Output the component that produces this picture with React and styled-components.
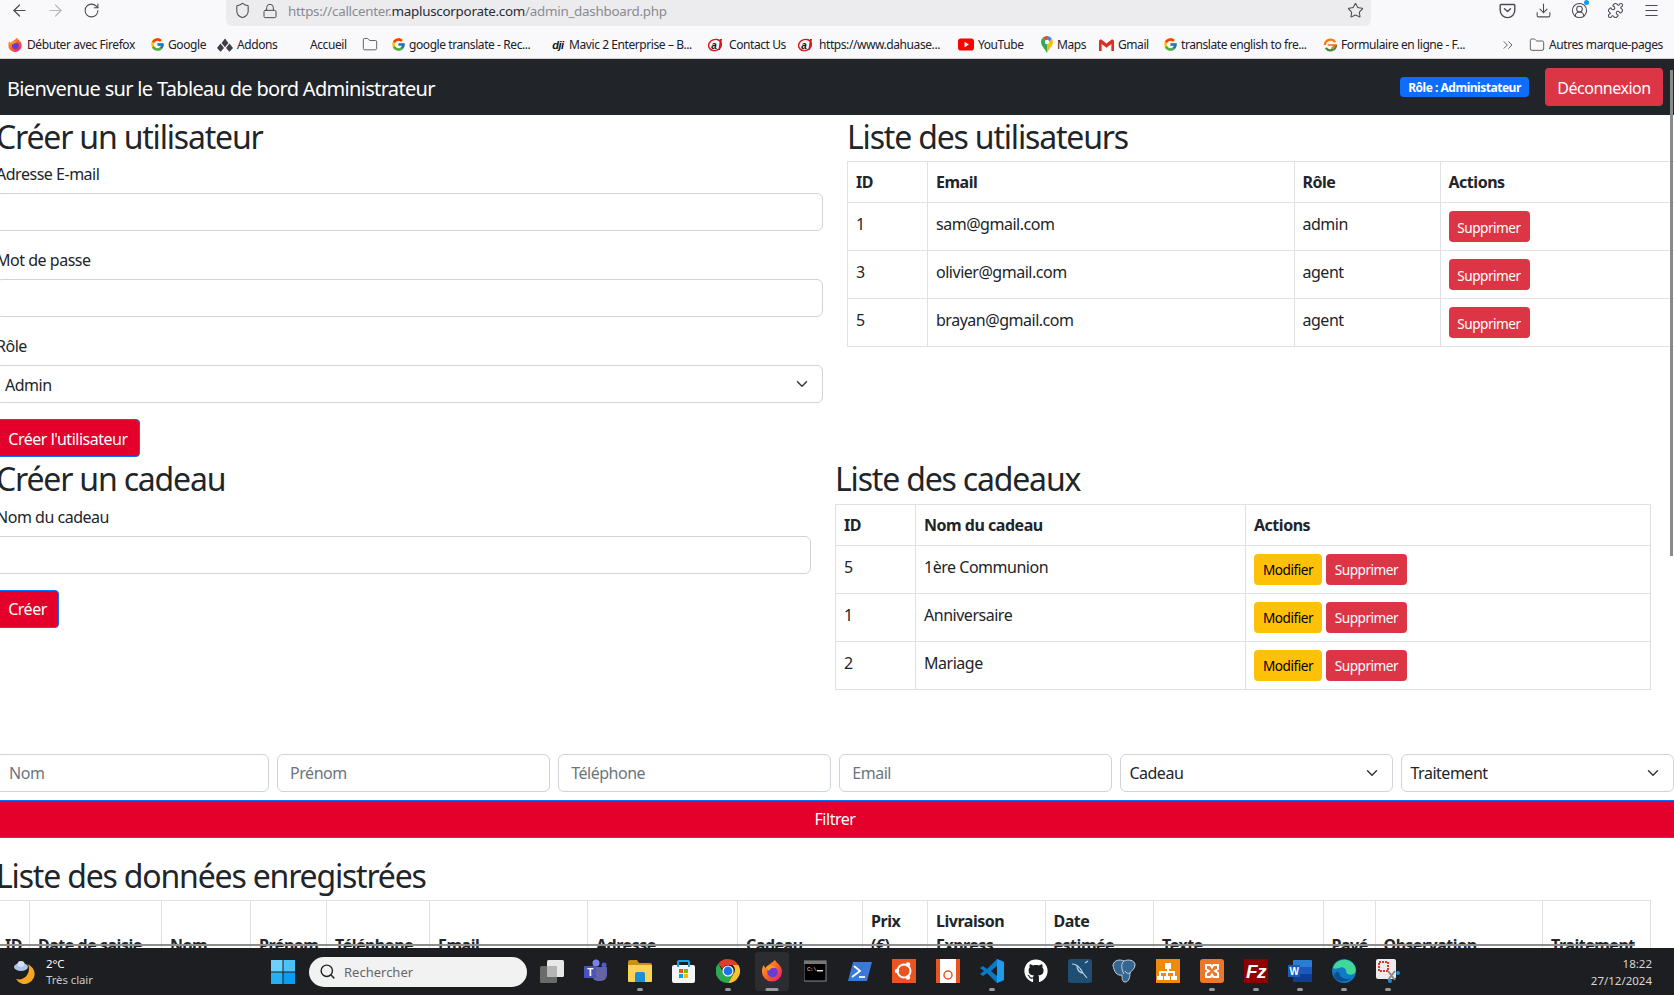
import React from 'react';
import styled, { createGlobalStyle } from 'styled-components';
import { ArrowLeft, ArrowRight, RotateCw, Shield, Lock, Star, Download, Puzzle, Menu, ChevronsRight, Folder, Search, CircleUserRound } from 'lucide-react';
import { FcGoogle } from 'react-icons/fc';
import { FaGithub } from 'react-icons/fa';

const FONT = `"Noto Sans", "Open Sans", sans-serif`;
const CHEVRON = `url("data:image/svg+xml,%3csvg xmlns='http://www.w3.org/2000/svg' viewBox='0 0 16 16'%3e%3cpath fill='none' stroke='%23343a40' stroke-linecap='round' stroke-linejoin='round' stroke-width='2' d='m2 5 6 6 6-6'/%3e%3c/svg%3e")`;

const Global = createGlobalStyle`
  html, body { margin: 0; padding: 0; height: 995px; overflow: hidden; background: #fff; }
  body { font-family: ${FONT}; font-size: 16px; line-height: 24px; color: #212529; letter-spacing: -0.03em; }
  * { box-sizing: border-box; }
`;

const Screen = styled.div`
  width: 1674px; height: 995px; display: flex; flex-direction: column; overflow: hidden;
`;
const BrowserChrome = styled.header`
  flex: none; height: 59px; background: #f9f9fb; border-bottom: 1px solid #cfcfd4; display: flex; flex-direction: column;
`;
const Toolbar = styled.div`
  height: 26px; display: flex; align-items: flex-start; color: #4a4a55;
`;
const NavGroup = styled.div`
  display: flex; width: 226px; padding-left: 1px;
`;
const ToolButton = styled.span`
  width: ${p => p.$w || 36}px; height: 21px; display: flex; align-items: center; justify-content: center; position: relative;
  color: ${p => p.$dim ? '#b8b8bf' : '#4a4a55'};
`;
const UrlBar = styled.div`
  width: 1145px; height: 26px; background: #ececee; border-radius: 0 0 6px 6px; display: flex; align-items: center; padding: 0 6px 5px 6px;
`;
const UrlText = styled.span`
  font-size: 13.4px; color: #8a8a92; flex: 1; white-space: nowrap; letter-spacing: -0.02em;
  b { font-weight: 400; color: #2b2b33; }
`;
const SideTools = styled.div`
  display: flex; margin-left: 118px;
`;
const Dot = styled.i`
  position: absolute; top: 0; right: 8px; width: 5px; height: 5px; border-radius: 50%; background: #0a9df5;
`;
const Bookmarks = styled.nav`
  height: 32px; display: flex; align-items: center; padding: 5px 0 0 7px; font-size: 12px; color: #20202a; letter-spacing: -0.035em;
`;
const Bookmark = styled.span`
  width: ${p => p.$w}px; flex: none; display: flex; align-items: center; gap: ${p => p.$gap ?? 4}px; white-space: nowrap;
`;
const BmIcon = styled.span`
  width: 16px; height: 16px; flex: none; display: flex; align-items: center; justify-content: center; color: #4a4a55;
`;
const DjiMark = styled.span`
  font: italic 900 11px "Liberation Sans", sans-serif; color: #111; letter-spacing: -0.5px;
`;

const PageArea = styled.main`
  flex: 1; min-height: 0; position: relative; overflow: hidden; background: #fff;
`;
const Navbar = styled.div`
  height: 56px; background: #212529; color: #fff; display: flex; align-items: center; justify-content: space-between; padding: 0 11px 0 7px;
`;
const Brand = styled.span`
  font-size: 20px; line-height: 30px; letter-spacing: -0.034em; padding-top: 4px;
`;
const NavRight = styled.div`
  display: flex; align-items: center; gap: 16px;
`;
const RoleBadge = styled.span`
  background: #0d6efd; color: #fff; font-size: 12px; font-weight: 700; line-height: 21px; height: 20px; width: 129px; text-align: center; border-radius: 4px;
`;
const LogoutButton = styled.button`
  font: inherit; letter-spacing: inherit; width: 118px; height: 38px; padding: 2px 0 0; background: #dc3545; color: #fff; border: 0; border-radius: 4px;
`;
const Content = styled.div`
  width: 1678px; margin-left: -4px;
`;
const Row = styled.section`
  display: grid; grid-template-columns: ${p => p.$cols}; column-gap: ${p => p.$gap}px; align-items: start;
`;
const Title = styled.h2`
  margin: 0 0 5px; padding-top: 3px; font-size: 32px; line-height: 38.4px; font-weight: 400; letter-spacing: -0.037em;
`;
const Field = styled.div`
  margin-bottom: 16px;
`;
const Label = styled.label`
  display: block; padding-top: 1px; margin-bottom: 7px;
`;
const TextInput = styled.input`
  display: block; width: 100%; height: 38px; font: inherit; letter-spacing: inherit; padding: 6px 12px; border: 1px solid #ced4da; border-radius: 6px; color: #212529; background: #fff;
  &::placeholder { color: #6c757d; opacity: 1; }
`;
const SelectBox = styled.select`
  display: block; width: 100%; height: 38px; font: inherit; letter-spacing: inherit; padding: 1px 36px 0 8px; border: 1px solid #ced4da; border-radius: 6px; color: #212529;
  appearance: none; background: #fff ${CHEVRON} no-repeat right 12px center / 16px 12px;
`;
const BrandButton = styled.button`
  display: block; height: 38px; padding: 1px 0 0; width: ${p => p.$w}; font: inherit; letter-spacing: inherit; color: #fff; background: #e4002b; border: 1px solid #0d6efd; border-radius: 4px;
`;
const Table = styled.table`
  width: ${p => p.$w}px; table-layout: fixed; border-collapse: collapse;
  th, td { border: 1px solid #dee2e6; padding: 8px; text-align: left; vertical-align: top; }
  td { padding: 9px 8px 7px; }
  td:last-child { padding: 8px; }
  thead th { vertical-align: bottom; font-weight: 700; }
`;
const Col = styled.col`
  width: ${p => p.$w}px;
`;
const ActionBtn = styled.button`
  height: 31px; width: ${p => p.$w}px; padding: 2px 0 0; font: inherit; font-size: 13.6px; letter-spacing: inherit; border: 0; border-radius: 4px;
  background: ${p => p.$warn ? '#ffc107' : '#dc3545'}; color: ${p => p.$warn ? '#000' : '#fff'};
  & + & { margin-left: 4px; }
`;
const FilterRow = styled.div`
  margin-top: 64px; display: grid; grid-template-columns: repeat(6, 272.5px); column-gap: 8.6px;
`;
const FilterSubmit = styled(BrandButton)`
  width: 100%; margin: 8px 0 16px; border-radius: 0; border-width: 1px 0;
`;
const ShadowLine = styled.div`
  position: absolute; left: 0; top: 885px; width: 1635px; height: 2px; background: #8e8e8e;
`;
const ScrollThumb = styled.div`
  position: absolute; right: 1px; top: 11px; width: 3px; height: 486px; background: #8a8a8a;
`;

const Taskbar = styled.footer`
  flex: none; height: 47px; background: #1d1e21; color: #fff; display: flex; align-items: center; position: relative; padding-left: 14px;
`;
const Weather = styled.div`
  width: 257px; display: flex; align-items: center; gap: 8px; font-size: 11.5px; line-height: 16px; letter-spacing: -0.01em;
  small { display: block; font-size: 11.5px; color: #c8c8c8; }
`;
const StartTile = styled.span`
  width: 24px; height: 24px; flex: none; margin-right: 14px; display: flex;
`;
const SearchPill = styled.div`
  width: 218px; height: 30px; flex: none; background: #f2f2f2; border-radius: 15px; display: flex; align-items: center; gap: 8px; padding-left: 10px; color: #666; font-size: 13px; letter-spacing: 0;
  svg { color: #222; }
`;
const Tasks = styled.div`
  display: flex; margin-left: 3px;
`;
const Task = styled.span`
  width: 44px; height: 47px; position: relative; display: flex; align-items: center; justify-content: center; padding-bottom: 2px;
  &::before { content: ''; display: ${p => p.$active ? 'block' : 'none'}; position: absolute; left: 5px; right: 5px; top: 4px; bottom: 4px; background: rgba(255,255,255,.07); border-radius: 4px; }
  &::after { content: ''; display: ${p => p.$on ? 'block' : 'none'}; position: absolute; left: 50%; bottom: 4px; height: 3px; border-radius: 2px; transform: translateX(-50%); width: ${p => p.$active ? 13 : 6}px; background: #9a9a9a; }
  svg { position: relative; }
`;
const Clock = styled.div`
  margin-left: auto; padding-right: 22px; text-align: right; font-size: 11.5px; line-height: 17px; color: #d8d8d8; letter-spacing: 0;
`;

const FirefoxIcon = ({ s = 16 }) => (
  <svg width={s} height={s} viewBox="0 0 24 24">
    <defs><linearGradient id="ffg" x1="0" y1="0" x2="1" y2="1"><stop offset="0" stopColor="#ffb327" /><stop offset=".55" stopColor="#ff5a2a" /><stop offset="1" stopColor="#e31587" /></linearGradient></defs>
    <path d="M15 1c1 3 7 5 7 12a10 10 0 1 1-20-1c0-3 1-5 2-6 0 2 1 2 2 3 1-3 5-4 9-8z" fill="url(#ffg)" />
    <circle cx="12.5" cy="13" r="5.2" fill="#6a3bd0" />
    <path d="M6 8c3-2 8-2 10 1-3-1-6 0-7 3L6 8z" fill="#ff9a24" />
  </svg>
);
const ChromeIcon = () => (
  <svg width="24" height="24" viewBox="0 0 24 24">
    <path d="M12 0a12 12 0 0 1 10.4 6H12a6 6 0 0 0-5.6 3.8L2.4 4.4A12 12 0 0 1 12 0z" fill="#e33b2e" />
    <path d="M22.4 6A12 12 0 0 1 12 24l5.2-9a6 6 0 0 0-.6-9z" fill="#fbc02d" />
    <path d="M12 24A12 12 0 0 1 2.4 4.4L7 13a6 6 0 0 0 10.2 2L12 24z" fill="#2da94f" />
    <circle cx="12" cy="12" r="5.6" fill="#fff" /><circle cx="12" cy="12" r="4.4" fill="#1a73e8" />
  </svg>
);
const AtIcon = () => (
  <svg width="16" height="16" viewBox="0 0 16 16">
    <ellipse cx="7" cy="8" rx="6.5" ry="5.5" fill="none" stroke="#d8141c" strokeWidth="1.4" transform="rotate(-20 7 8)" />
    <text x="3.2" y="11.5" fontSize="10" fontWeight="900" fontStyle="italic" fontFamily="Liberation Sans" fill="#111">a</text>
    <path d="M12 2l2 0-2 11-1.6 0z" fill="#d8141c" />
  </svg>
);
const AddonsIcon = () => (
  <svg width="16" height="16" viewBox="0 0 16 16" fill="#3e3e48">
    <path d="M8 1.500l3.400 4.500-3.400 4.200L4.600 6zM3.500 6.500L7 11l-3.500 3.800L0 11zM12.500 6.500L16 11l-3.500 3.800L9 11z" />
  </svg>
);
const PocketIcon = () => (
  <svg width="17" height="17" viewBox="0 0 17 17" fill="none" stroke="currentColor" strokeWidth="1.4" strokeLinejoin="round" strokeLinecap="round">
    <path d="M2 2.500h13a.8.8 0 0 1 .8.8v5a7.300 7.300 0 0 1-14.600 0v-5a.8.8 0 0 1 .8-.8z" />
    <path d="M5.500 6.800l3 2.800 3-2.800" />
  </svg>
);
const YoutubeIcon = () => (
  <svg width="17" height="13" viewBox="0 0 17 13"><rect width="17" height="13" rx="3" fill="#f00" /><path d="M7 3.5l4.5 3L7 9.5z" fill="#fff" /></svg>
);
const MapsIcon = () => (
  <svg width="12" height="17" viewBox="0 0 12 17">
    <path d="M6 17C4 13 0 9.5 0 6a6 6 0 0 1 2-4.5L6 6z" fill="#34a853" /><path d="M2 1.500A6 6 0 0 1 6 0l2 3-2 3z" fill="#ea4335" />
    <path d="M6 0a6 6 0 0 1 5 3L6 8z" fill="#4285f4" /><path d="M11 3a6 6 0 0 1 1 3c0 3.500-4 7-6 11V8z" fill="#fbbc04" />
    <circle cx="6" cy="6" r="2.200" fill="#fff" />
  </svg>
);
const GmailIcon = () => (
  <svg width="15" height="12" viewBox="0 0 15 12"><path d="M1 12V2l6.500 5L14 2v10h-2.500V5.500l-4 3-4-3V12z" fill="#e8e8e8" /><path d="M0 2.500C0 .5 2 0 3 1l4.500 3.500L12 1c1-1 3-.5 3 1.500V12h-2.600V5L7.500 8.700 2.600 5v7H0z" fill="#d93025" /></svg>
);
const FormIcon = () => (
  <svg width="15" height="16" viewBox="0 0 16 16" fill="none"><path d="M2 8a6 6 0 0 1 11-3" stroke="#f57c00" strokeWidth="2.400" /><path d="M14 8a6 6 0 0 1-11 3" stroke="#3e8e41" strokeWidth="2.400" /><path d="M5 8h8L9 12" stroke="#ef6c00" strokeWidth="1.800" /></svg>
);
const WeatherIcon = () => (
  <svg width="24" height="24" viewBox="0 0 24 24">
    <path d="M9 4a10 10 0 1 1-7 15c7 2 13-3 13-11 0-2-1-3-2-4z" fill="#f5a623" />
    <ellipse cx="7" cy="7" rx="7" ry="4" fill="#a8c4ea" /><ellipse cx="7" cy="4" rx="3.500" ry="3" fill="#d4e1f2" />
  </svg>
);
const WinLogo = () => (
  <svg width="24" height="24" viewBox="0 0 24 24">
    <rect width="11.500" height="11.500" fill="#6fd0fb" /><rect x="12.500" width="11.500" height="11.500" fill="#4cc2f7" />
    <rect y="12.500" width="11.500" height="11.500" fill="#26b0f4" /><rect x="12.500" y="12.500" width="11.500" height="11.500" fill="#0e9cf0" />
  </svg>
);
const I = ({ children, vb = '0 0 24 24' }) => <svg width="24" height="24" viewBox={vb}>{children}</svg>;
const taskIcons = [
  { on: 0, el: <I><rect x="7" y="1" width="17" height="17" rx="1.500" fill="#e8e8e8" /><rect x="0" y="7" width="17" height="17" rx="1.500" fill="#6a6a6a" /><rect x="7" y="7" width="10" height="11" fill="#b5b5b5" /></I> },
  { on: 0, el: <I><circle cx="12" cy="4" r="3.500" fill="#7b83eb" /><circle cx="20" cy="6" r="2.500" fill="#5059c9" /><path d="M8 8h15v8a6 6 0 0 1-6 6h-3a6 6 0 0 1-6-6z" fill="#6264a7" /><rect y="7" width="12" height="12" rx="1" fill="#4b53bc" /><text x="6" y="16.500" textAnchor="middle" fontSize="10" fontWeight="700" fontFamily="Liberation Sans" fill="#fff">T</text></I> },
  { on: 1, el: <I><path d="M0 3a2 2 0 0 1 2-2h7l2 3h11a2 2 0 0 1 2 2v3H0z" fill="#c98f1b" /><path d="M0 6h24v16a1 1 0 0 1-1 1H1a1 1 0 0 1-1-1z" fill="#fbd258" /><path d="M7 15a2 2 0 0 1 2-2h6a2 2 0 0 1 2 2v8H7z" fill="#1a8fd6" /></I> },
  { on: 0, el: <I><rect y="6" width="23" height="18" rx="2" fill="#f5f5f5" /><path d="M6 8V3a1 1 0 0 1 1-1h9a1 1 0 0 1 1 1v5" fill="none" stroke="#17a7e0" strokeWidth="2" /><rect x="7" y="10" width="4" height="4" fill="#f25022" /><rect x="12" y="10" width="4" height="4" fill="#7fba00" /><rect x="7" y="15" width="4" height="4" fill="#00a4ef" /><rect x="12" y="15" width="4" height="4" fill="#ffb900" /></I> },
  { on: 1, el: <ChromeIcon /> },
  { on: 1, active: 1, el: <FirefoxIcon s={24} /> },
  { on: 0, el: <I><rect y="2" width="22" height="20" fill="#000" stroke="#8a8a8a" /><rect y="2" width="22" height="3" fill="#777" /><text x="3" y="12" fontSize="6" fontFamily="Liberation Mono" fill="#ddd">C:\</text><rect x="13" y="11" width="6" height="1.500" fill="#ddd" /></I> },
  { on: 0, el: <I><path d="M5 3h19l-5 19H0z" fill="#3b78d8" /><path d="M6 7l6 5-8 6" fill="none" stroke="#fff" strokeWidth="1.800" /><path d="M11 18h6" stroke="#fff" strokeWidth="1.800" /></I> },
  { on: 0, el: <I><rect width="24" height="24" fill="#e95420" /><circle cx="12" cy="12" r="6.500" fill="none" stroke="#fff" strokeWidth="2" /><circle cx="5" cy="12" r="2.200" fill="#fff" /><circle cx="16" cy="5.500" r="2.200" fill="#fff" /><circle cx="16" cy="18.500" r="2.200" fill="#fff" /></I> },
  { on: 0, el: <I><rect width="24" height="24" fill="#e95420" /><rect x="4" width="16" height="24" fill="#fff" /><circle cx="12" cy="16" r="4" fill="none" stroke="#e95420" strokeWidth="1.500" /></I> },
  { on: 1, el: <I><path d="M17 0l7 3v18l-7 3L7 14l-4 3-3-2 4-3-4-3 3-2 4 3z" fill="#0b7ac6" /><path d="M17 0l7 3v18l-7 3z" fill="#1f9cf0" /><path d="M17 7l-6 5 6 5z" fill="#1d1e21" /></I> },
  { on: 0, el: <FaGithub size={24} color="#fff" /> },
  { on: 0, el: <I><rect width="24" height="24" rx="3" fill="#1f4e74" /><path d="M4 5c6 0 9 5 11 9l4 5M15 14c-3 0-6-3-6-7M17 4l3-2" fill="none" stroke="#b8d0e0" strokeWidth="1.200" /></I> },
  { on: 0, el: <I><path d="M1 6c1-5 7-6 11-4 4-2 11-1 11 4 0 4-4 6-5 8 0 4-1 9-5 9-3 0-3-4-3-7-5 1-8-3-9-10z" fill="#336791" stroke="#c5d2dc" strokeWidth="1" /><path d="M12 2c-3 2-3 8 0 13M18 14c-2 1-4 0-5-2" fill="none" stroke="#c5d2dc" strokeWidth="1" /></I> },
  { on: 0, el: <I><rect width="24" height="24" fill="#f08a0c" /><path d="M9 4h6v6h-2v2h6v5h2v4h-6v-4h2v-3h-5v3h2v4H8v-4h2v-3H5v3h2v4H1v-4h2v-5h8v-2H9z" fill="#fff" /></I> },
  { on: 1, el: <I><rect width="24" height="24" rx="3" fill="#e9772c" /><path d="M6 6h4.500L12 8.500 13.500 6H18v4l-3 2 3 2v4h-4.500L12 15.500 10.500 18H6v-4l3-2-3-2z" fill="none" stroke="#fff" strokeWidth="2" /></I> },
  { on: 1, el: <I><rect width="24" height="24" fill="#8f0000" /><text x="12" y="19" textAnchor="middle" fontSize="19" fontStyle="italic" fontWeight="700" fontFamily="Liberation Sans" fill="#fff">Fz</text></I> },
  { on: 1, el: <I><rect x="5" y="1" width="19" height="22" rx="1" fill="#2b7cd3" /><rect x="5" y="8" width="19" height="7" fill="#185abd" /><rect x="5" y="15" width="19" height="8" fill="#103f91" /><rect y="6" width="12" height="12" fill="#185abd" /><text x="6" y="16" textAnchor="middle" fontSize="10" fontWeight="700" fontFamily="Liberation Sans" fill="#fff">W</text></I> },
  { on: 1, el: <I><circle cx="12" cy="12" r="12" fill="#0f7bc4" /><path d="M1 9C3 1 12-1 18 2c5 3 7 8 5 12-3 3-9 2-9-2 0-3-4-5-7-3-3 1-5 1-6 0z" fill="#41d69a" /><path d="M7 13c0 5 6 9 12 6-4 5-14 5-17-2 0-3 3-5 5-4z" fill="#0c4f8f" /></I> },
  { on: 1, el: <I><rect width="20" height="20" rx="2" fill="#ececec" /><rect x="3" y="3" width="9" height="9" fill="none" stroke="#d83b2b" strokeWidth="2" strokeDasharray="2 1" /><path d="M12 12l7 9M19 12l-7 9" stroke="#8a8a8a" strokeWidth="2" /><circle cx="22" cy="14" r="2" fill="#1a8fd6" /><circle cx="14" cy="22" r="2" fill="#1a8fd6" /></I> },
];

const marks = [
  { w: 142, icon: <FirefoxIcon />, text: 'Débuter avec Firefox' },
  { w: 68, icon: <FcGoogle size={15} />, text: 'Google', gap: 3 },
  { w: 93, icon: <AddonsIcon />, text: 'Addons' },
  { w: 52, text: 'Accueil' },
  { w: 28, icon: <Folder size={17} strokeWidth={1.300} /> },
  { w: 160, icon: <FcGoogle size={15} />, text: 'google translate - Rec...', gap: 3 },
  { w: 158, icon: <DjiMark>dji</DjiMark>, text: 'Mavic 2 Enterprise – B...', gap: 3 },
  { w: 90, icon: <AtIcon />, text: 'Contact Us', gap: 5 },
  { w: 160, icon: <AtIcon />, text: 'https://www.dahuase...', gap: 5 },
  { w: 81, icon: <YoutubeIcon />, text: 'YouTube', gap: 4 },
  { w: 59, icon: <MapsIcon />, text: 'Maps', gap: 2 },
  { w: 64, icon: <GmailIcon />, text: 'Gmail', gap: 4 },
  { w: 160, icon: <FcGoogle size={15} />, text: 'translate english to fre...', gap: 3 },
  { w: 178, icon: <FormIcon />, text: 'Formulaire en ligne - F...', gap: 3 },
  { w: 29, icon: <ChevronsRight size={18} strokeWidth={1.300} /> },
  { w: 140, icon: <Folder size={16} strokeWidth={1.300} />, text: 'Autres marque-pages', gap: 4 },
];
const users = [['1', 'sam@gmail.com', 'admin'], ['3', 'olivier@gmail.com', 'agent'], ['5', 'brayan@gmail.com', 'agent']];
const gifts = [['5', '1ère Communion'], ['1', 'Anniversaire'], ['2', 'Mariage']];
const dataCols = [
  [33, 'ID'], [132, 'Date de saisie'], [89, 'Nom'], [76, 'Prénom'], [103, 'Téléphone'], [158, 'Email'], [150, 'Adresse'], [125, 'Cadeau'],
  [65, 'Prix (€)'], [117.500, 'Livraison Express'], [108.500, 'Date estimée'], [169.500, 'Texte'], [52, 'Pavé'], [167.500, 'Observation'], [108, 'Traitement'],
];

export default function App() {
  return (
    <Screen>
      <Global />
      <BrowserChrome>
        <Toolbar>
          <NavGroup>
            <ToolButton><ArrowLeft size={19} strokeWidth={1.500} /></ToolButton>
            <ToolButton $dim><ArrowRight size={19} strokeWidth={1.500} /></ToolButton>
            <ToolButton><RotateCw size={17} strokeWidth={1.500} /></ToolButton>
          </NavGroup>
          <UrlBar>
            <ToolButton $w={20}><Shield size={17} strokeWidth={1.500} /></ToolButton>
            <ToolButton $w={36}><Lock size={16} strokeWidth={1.500} /></ToolButton>
            <UrlText>https://callcenter.<b>mapluscorporate.com</b>/admin_dashboard.php</UrlText>
            <ToolButton $w={20}><Star size={17} strokeWidth={1.500} /></ToolButton>
          </UrlBar>
          <SideTools>
            <ToolButton><PocketIcon /></ToolButton>
            <ToolButton><Download size={17} strokeWidth={1.500} /></ToolButton>
            <ToolButton><CircleUserRound size={17} strokeWidth={1.500} /><Dot /></ToolButton>
            <ToolButton><Puzzle size={17} strokeWidth={1.500} /></ToolButton>
            <ToolButton><Menu size={17} strokeWidth={1.500} /></ToolButton>
          </SideTools>
        </Toolbar>
        <Bookmarks>
          {marks.map((m, i) => (
            <Bookmark key={i} $w={m.w} $gap={m.gap}>
              {m.icon && <BmIcon>{m.icon}</BmIcon>}
              {m.text}
            </Bookmark>
          ))}
        </Bookmarks>
      </BrowserChrome>
      <PageArea>
        <Navbar>
          <Brand>Bienvenue sur le Tableau de bord Administrateur</Brand>
          <NavRight>
            <RoleBadge>Rôle : Administateur</RoleBadge>
            <LogoutButton>Déconnexion</LogoutButton>
          </NavRight>
        </Navbar>
        <Content>
          <Row $cols="827px 832px" $gap={24}>
            <div>
              <Title>Créer un utilisateur</Title>
              <Field><Label>Adresse E-mail</Label><TextInput /></Field>
              <Field><Label>Mot de passe</Label><TextInput /></Field>
              <Field><Label>Rôle</Label><SelectBox defaultValue="admin"><option value="admin">Admin</option></SelectBox></Field>
              <BrandButton $w="144px">Créer l'utilisateur</BrandButton>
            </div>
            <div>
              <Title>Liste des utilisateurs</Title>
              <Table $w={832}>
                <colgroup><Col $w={80} /><Col $w={366.500} /><Col $w={146} /><Col $w={239.500} /></colgroup>
                <thead><tr><th>ID</th><th>Email</th><th>Rôle</th><th>Actions</th></tr></thead>
                <tbody>
                  {users.map(u => (
                    <tr key={u[0]}><td>{u[0]}</td><td>{u[1]}</td><td>{u[2]}</td><td><ActionBtn $w={81}>Supprimer</ActionBtn></td></tr>
                  ))}
                </tbody>
              </Table>
            </div>
          </Row>
          <Row $cols="815px 815px" $gap={24}>
            <div>
              <Title>Créer un cadeau</Title>
              <Field><Label>Nom du cadeau</Label><TextInput /></Field>
              <BrandButton $w="63px">Créer</BrandButton>
            </div>
            <div>
              <Title>Liste des cadeaux</Title>
              <Table $w={815}>
                <colgroup><Col $w={80} /><Col $w={330} /><Col $w={405} /></colgroup>
                <thead><tr><th>ID</th><th>Nom du cadeau</th><th>Actions</th></tr></thead>
                <tbody>
                  {gifts.map(g => (
                    <tr key={g[0]}><td>{g[0]}</td><td>{g[1]}</td><td><ActionBtn $warn $w={68}>Modifier</ActionBtn><ActionBtn $w={81}>Supprimer</ActionBtn></td></tr>
                  ))}
                </tbody>
              </Table>
            </div>
          </Row>
          <FilterRow>
            <TextInput placeholder="Nom" />
            <TextInput placeholder="Prénom" />
            <TextInput placeholder="Téléphone" />
            <TextInput placeholder="Email" />
            <SelectBox defaultValue="c"><option value="c">Cadeau</option></SelectBox>
            <SelectBox defaultValue="t"><option value="t">Traitement</option></SelectBox>
          </FilterRow>
          <FilterSubmit>Filtrer</FilterSubmit>
          <Title>Liste des données enregistrées</Title>
          <Table $w={1654}>
            <colgroup>{dataCols.map(c => <Col key={c[1]} $w={c[0]} />)}</colgroup>
            <thead><tr>{dataCols.map(c => <th key={c[1]}>{c[1]}</th>)}</tr></thead>
          </Table>
        </Content>
        <ShadowLine />
        <ScrollThumb />
      </PageArea>
      <Taskbar>
        <Weather>
          <WeatherIcon />
          <div>2°C<small>Très clair</small></div>
        </Weather>
        <StartTile><WinLogo /></StartTile>
        <SearchPill><Search size={17} strokeWidth={2} />Rechercher</SearchPill>
        <Tasks>
          {taskIcons.map((t, i) => <Task key={i} $on={t.on} $active={t.active}>{t.el}</Task>)}
        </Tasks>
        <Clock>18:22<br />27/12/2024</Clock>
      </Taskbar>
    </Screen>
  );
}
